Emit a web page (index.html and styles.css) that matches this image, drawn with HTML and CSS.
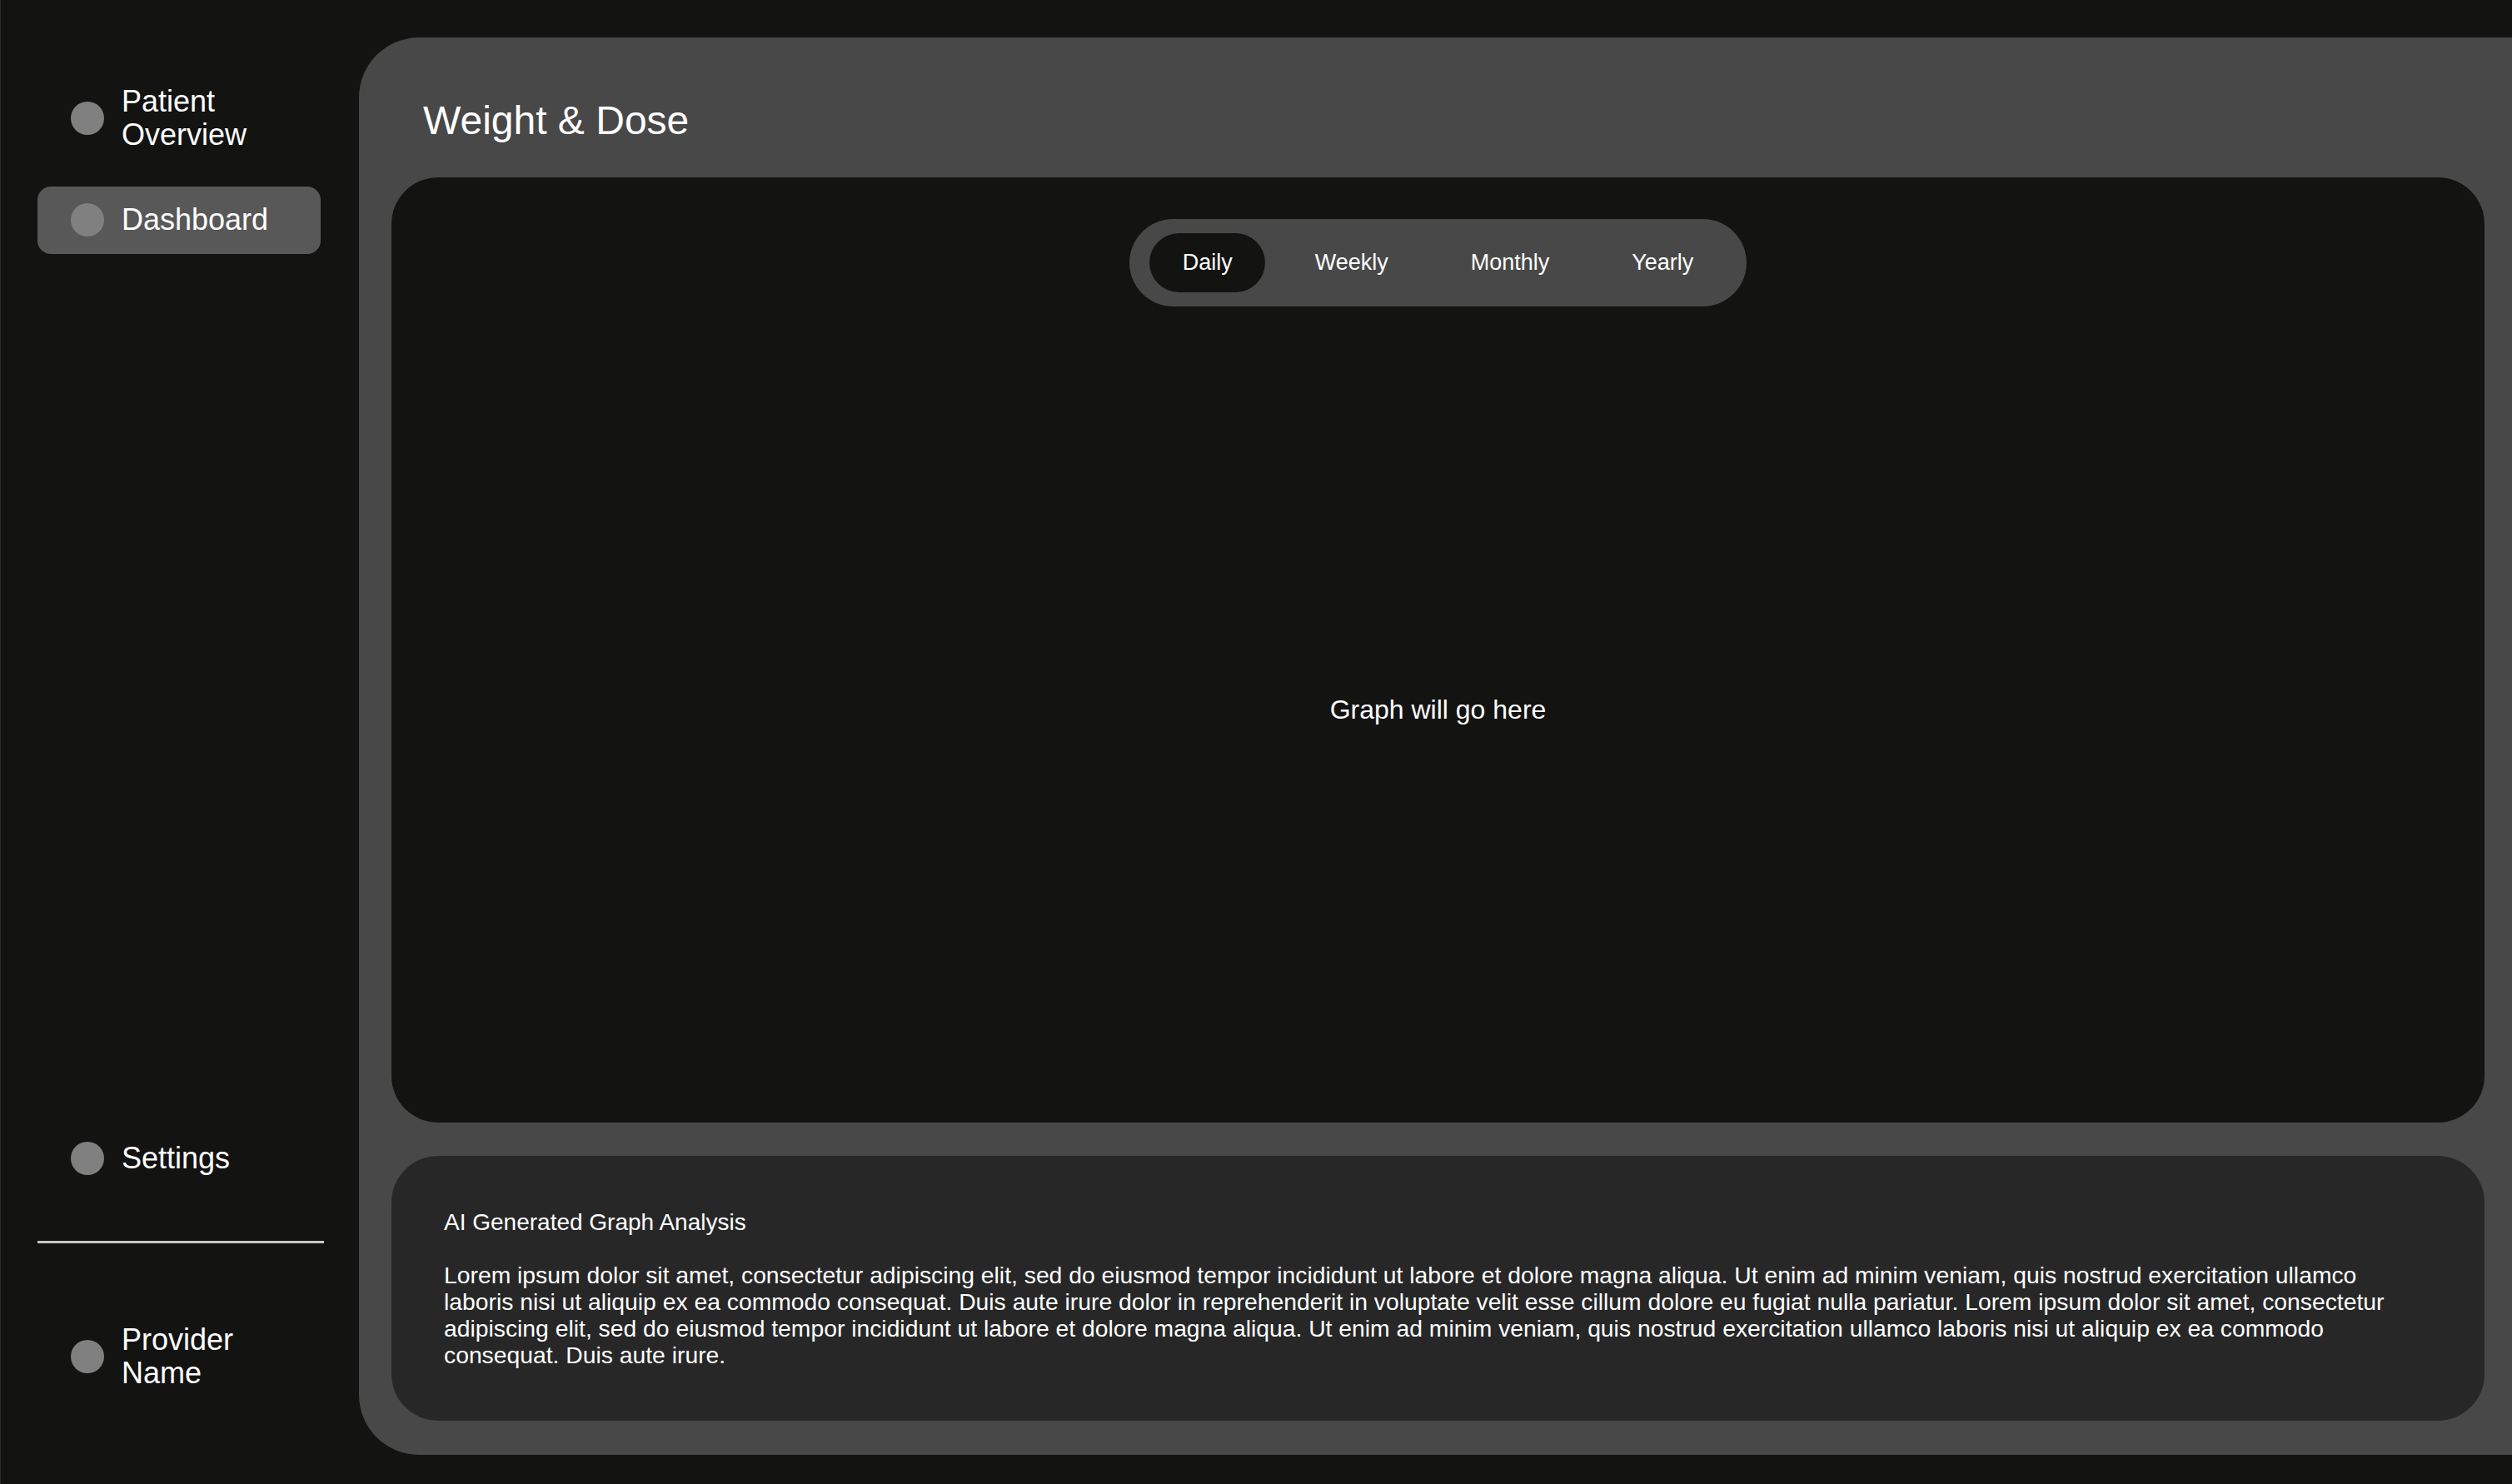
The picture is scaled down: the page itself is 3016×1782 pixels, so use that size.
FILE: index.html
```html
<!DOCTYPE html>
<html lang="en">
<head>
<meta charset="utf-8">
<title>Weight &amp; Dose</title>
<link rel="stylesheet" href="styles.css">
</head>
<body>
<div class="app">
  <aside class="sidebar">
    <nav class="nav-top">
      <a class="nav-item"><span class="dot"></span><span class="nav-label">Patient<br>Overview</span></a>
      <a class="nav-item active"><span class="dot"></span><span class="nav-label">Dashboard</span></a>
    </nav>
    <div class="nav-bottom">
      <a class="nav-item"><span class="dot"></span><span class="nav-label">Settings</span></a>
      <div class="divider"></div>
      <a class="nav-item provider"><span class="dot"></span><span class="nav-label">Provider<br>Name</span></a>
    </div>
  </aside>
  <main class="panel">
    <h1 class="title">Weight &amp; Dose</h1>
    <section class="graph-card">
      <div class="tabs">
        <button class="tab active">Daily</button>
        <button class="tab">Weekly</button>
        <button class="tab">Monthly</button>
        <button class="tab">Yearly</button>
      </div>
      <div class="graph-area">Graph will go here</div>
    </section>
    <section class="analysis-card">
      <h2 class="analysis-title">AI Generated Graph Analysis</h2>
      <p class="analysis-text">Lorem ipsum dolor sit amet, consectetur adipiscing elit, sed do eiusmod tempor incididunt ut labore et dolore magna aliqua. Ut enim ad minim veniam, quis nostrud exercitation ullamco laboris nisi ut aliquip ex ea commodo consequat. Duis aute irure dolor in reprehenderit in voluptate velit esse cillum dolore eu fugiat nulla pariatur. Lorem ipsum dolor sit amet, consectetur adipiscing elit, sed do eiusmod tempor incididunt ut labore et dolore magna aliqua. Ut enim ad minim veniam, quis nostrud exercitation ullamco laboris nisi ut aliquip ex ea commodo consequat. Duis aute irure.</p>
    </section>
  </main>
</div>
</body>
</html>
```
FILE: styles.css
```css
* { box-sizing: border-box; }
html, body {
  margin: 0;
  padding: 0;
  height: 100%;
  background: #131312;
  color: #ffffff;
  font-family: "Liberation Sans", Arial, Helvetica, sans-serif;
  overflow: hidden;
}
body { box-shadow: inset 1px 0 0 #2c2c2c; }

.app {
  display: flex;
  height: 1782px;
  width: 3016px;
}

.sidebar {
  flex: 0 0 431px;
  display: flex;
  flex-direction: column;
  justify-content: space-between;
  padding: 82px 42px 93px 45px;
}
.nav-top, .nav-bottom {
  display: flex;
  flex-direction: column;
}
.nav-top { gap: 22px; }

.nav-item {
  display: flex;
  align-items: center;
  gap: 21px;
  padding: 20px 40px;
  border-radius: 16px;
  font-size: 36px;
  line-height: 40px;
  color: #ffffff;
  width: 340px;
}
.nav-item.active {
  background: #585858;
  padding-top: 20px;
  padding-bottom: 21px;
}
.dot {
  flex: 0 0 40px;
  width: 40px;
  height: 40px;
  border-radius: 50%;
  background: #808080;
}
.divider {
  height: 3px;
  width: 344px;
  background: #c9c9c9;
  margin: 59px 0 76px;
}

.panel {
  flex: 1 1 auto;
  margin: 45px 0 35px 0;
  background: #484848;
  border-radius: 72px 0 0 72px;
  padding: 76px 33px 41px 39px;
  display: flex;
  flex-direction: column;
}
.title {
  margin: 0 0 44px 38px;
  font-size: 48px;
  line-height: 48px;
  font-weight: 400;
}

.graph-card {
  background: #131312;
  border-radius: 56px;
  height: 1135px;
  display: flex;
  flex-direction: column;
  align-items: center;
  padding: 50px 0 12px;
}
.tabs {
  display: flex;
  gap: 20px;
  padding: 17px 24px;
  background: #484848;
  border-radius: 53px;
}
.tab {
  font-family: inherit;
  font-size: 27px;
  line-height: 71px;
  height: 71px;
  padding: 0 39.5px;
  border: 0;
  border-radius: 36px;
  background: transparent;
  color: #ffffff;
}
.tab.active { background: #131312; }

.graph-area {
  flex: 1;
  display: flex;
  align-items: center;
  justify-content: center;
  font-size: 32px;
  color: #ffffff;
}

.analysis-card {
  margin-top: 40px;
  background: #272727;
  border-radius: 56px;
  padding: 64px 105px 63px 63px;
  flex: 1;
}
.analysis-title {
  margin: 0 0 31px;
  font-size: 28px;
  line-height: 32px;
  font-weight: 400;
}
.analysis-text {
  margin: 0;
  font-size: 28.3px;
  line-height: 32px;
}
```
